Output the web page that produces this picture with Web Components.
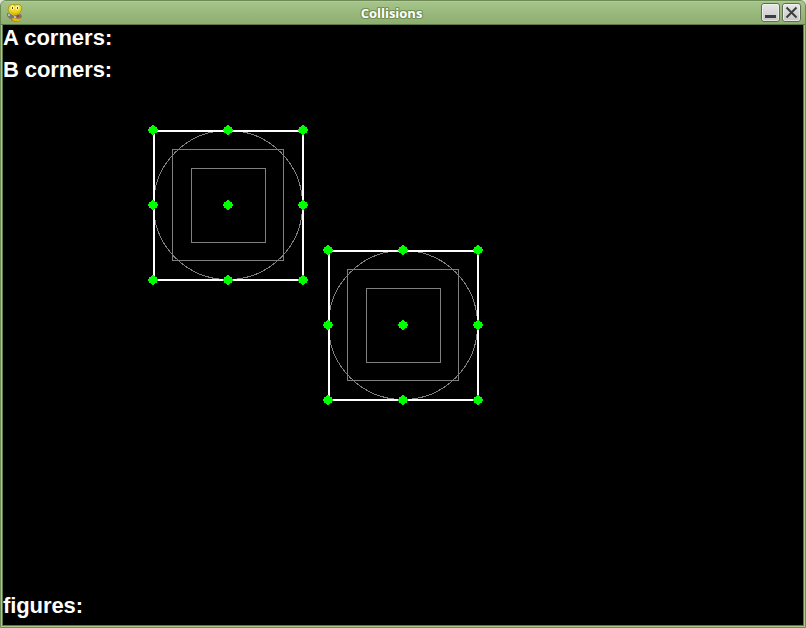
<!DOCTYPE html>
<html lang="en"><head><meta charset="utf-8"><title>Collisions</title>
<style>html,body{margin:0;width:806px;height:628px;overflow:hidden;background:#d9e3cf}</style></head>
<body>
<app-window><window-title slot="title">Collisions</window-title>
<collision-scene>
<scene-label slot="top">A corners:</scene-label><scene-label slot="top" style="letter-spacing:-.1px">B corners:</scene-label>
<scene-figure style="--x:145px;--y:100px"></scene-figure><scene-figure style="--x:320px;--y:220px"></scene-figure>
<scene-label slot="bottom" style="letter-spacing:-.1px">figures:</scene-label>
</collision-scene></app-window>
<script>
const define=(name,html)=>customElements.define(name,class extends HTMLElement{
 constructor(){super();this.attachShadow({mode:'open'}).innerHTML=html;}
});
define('app-window',`<style>
:host{display:flex;flex-direction:column;box-sizing:border-box;width:806px;height:628px;border:1px solid #6e8a54;border-radius:6px 6px 0 0;background:#a9cd89;overflow:hidden}
.body{flex:1;margin:0 1px 1px;border:1px solid #5e7648;border-top:0;background:#000;min-height:0}
</style><slot name="title"></slot><div class="body"><slot></slot></div>`);
customElements.define('window-button',class extends HTMLElement{connectedCallback(){
 const glyph=this.getAttribute('kind')==='close'
  ?'<path d="M4.5 4.5l10 10m0-10l-10 10" stroke="#3b3f3b" stroke-width="2"/>'
  :'<path d="M4 12h11v3H4z" fill="#3b3f3b"/>';
 this.attachShadow({mode:'open'}).innerHTML=`<style>:host{display:block;width:19px;height:19px;flex:none}svg{display:block}</style><svg width="19" height="19"><defs><linearGradient id="g" x2="0" y2="1"><stop stop-color="#e8e8e8"/><stop offset="1" stop-color="#c6c6c6"/></linearGradient></defs><rect x=".5" y=".5" width="18" height="18" rx="2.5" fill="url(#g)" stroke="#5f6b55"/><rect x="1.5" y="1.5" width="16" height="16" rx="1.5" fill="none" stroke="#f4f4f4" stroke-opacity=".7"/>${glyph}</svg>`;
}});
define('window-title',`<style>
:host{display:flex;align-items:center;box-sizing:border-box;height:24px;flex:none;padding:0 4px 0 5px;background:linear-gradient(#b9d79f 0,#a5c489 1px,#8fae72 22px);border-bottom:1px solid #5e7648;font:bold 13px/22px "Open Sans","Noto Sans",sans-serif;color:#fff}
.t{flex:1;text-align:center;padding-right:2px;padding-top:1px;text-shadow:1px 0 #6f8f52,-1px 0 #6f8f52,0 1px #6f8f52,0 -1px #6f8f52,1px 1px #7f9f62,-1px -1px #7f9f62,1px -1px #7f9f62,-1px 1px #7f9f62}
svg{display:block;flex:none}window-button+window-button{margin-left:2px}
</style>
<svg width="18" height="18" viewBox="0 0 18 18"><path d="M5 14l2-4h5l3 3-1 4-5 1-4-1z" fill="#b78b08"/><path d="M7 12h5l3 3-2 2H8l-2-2z" fill="#e3b90b"/><path d="M3 2l3-2 3 1 4-1 3 3-1 4-2 3-5 2-4-2-2-4z" fill="#ecd726" stroke="#a88c10" stroke-width=".8"/><path d="M4 7q5 4 10 0l-2 3q-3 2-6 0z" fill="#d9b514"/><ellipse cx="6.5" cy="3.8" rx="2" ry="2.3" fill="#fff59a"/><ellipse cx="11.3" cy="3.8" rx="2" ry="2.3" fill="#fff59a"/><path d="M6 3h1v2H6zM11 3h1v2h-1z" fill="#574b22"/><path d="M1 9l4 1 2 2 4-1 4-1 1 3-3 2-5-1-4 1-3-3z" fill="#77776f"/><path d="M2 10h2v2H2zM8 12h2v2H8z" fill="#bbb"/><path d="M11 11h2v2h-2z" fill="#b33"/></svg>
<span class="t"><slot></slot></span>
<window-button kind="minimize"></window-button><window-button kind="close"></window-button>`);
define('collision-scene',`<style>
:host{position:relative;display:flex;flex-direction:column;justify-content:space-between;width:800px;height:600px;background:#000;overflow:hidden}
.top,.bottom{display:flex;flex-direction:column}
</style><div class="top"><slot name="top"></slot></div><slot></slot><div class="bottom"><slot name="bottom"></slot></div>`);
define('scene-label',`<style>:host{display:block;height:32px;font:bold 22px/26px "Liberation Sans",Arial,sans-serif;color:#fff;white-space:nowrap}</style><slot></slot>`);
const dot=(x,y)=>`<path transform="translate(${x} ${y})" d="M3 0h4v1h1v1h1v2h1v2h-1v2h-1v1h-1v1h-4v-1h-1v-1h-1v-2h-1v-2h1v-2h1v-1h1z"/>`;
const dots=[0,75,150].flatMap(y=>[0,75,150].map(x=>dot(x,y).replace('M3 0h4v1h1v1h1v2h1v2h-1v2h-1v1h-1v1h-4v-1h-1v-1h-1v-2h-1v-2h1v-2h1v-1h1z','M4 0h2v1h1v1h2v1h0v1h1v2h-1v2h-2v1h-1v1h-2v-1h-1v-1h-2v-2h-1v-2h1v-2h2v-1h1z'))).join('');
define('scene-figure',`<style>:host{position:absolute;left:var(--x);top:var(--y);width:160px;height:160px}svg{display:block}</style>
<svg width="160" height="160" shape-rendering="crispEdges"><g fill="none" stroke="#808080"><circle cx="80" cy="80" r="74.5"/><rect x="24.5" y="24.5" width="111" height="111"/><rect x="43.5" y="43.5" width="74" height="74"/></g><rect x="6" y="6" width="149" height="149" fill="none" stroke="#fff" stroke-width="2"/><g fill="#0f0">${dots}</g></svg>`);
</script></body></html>
